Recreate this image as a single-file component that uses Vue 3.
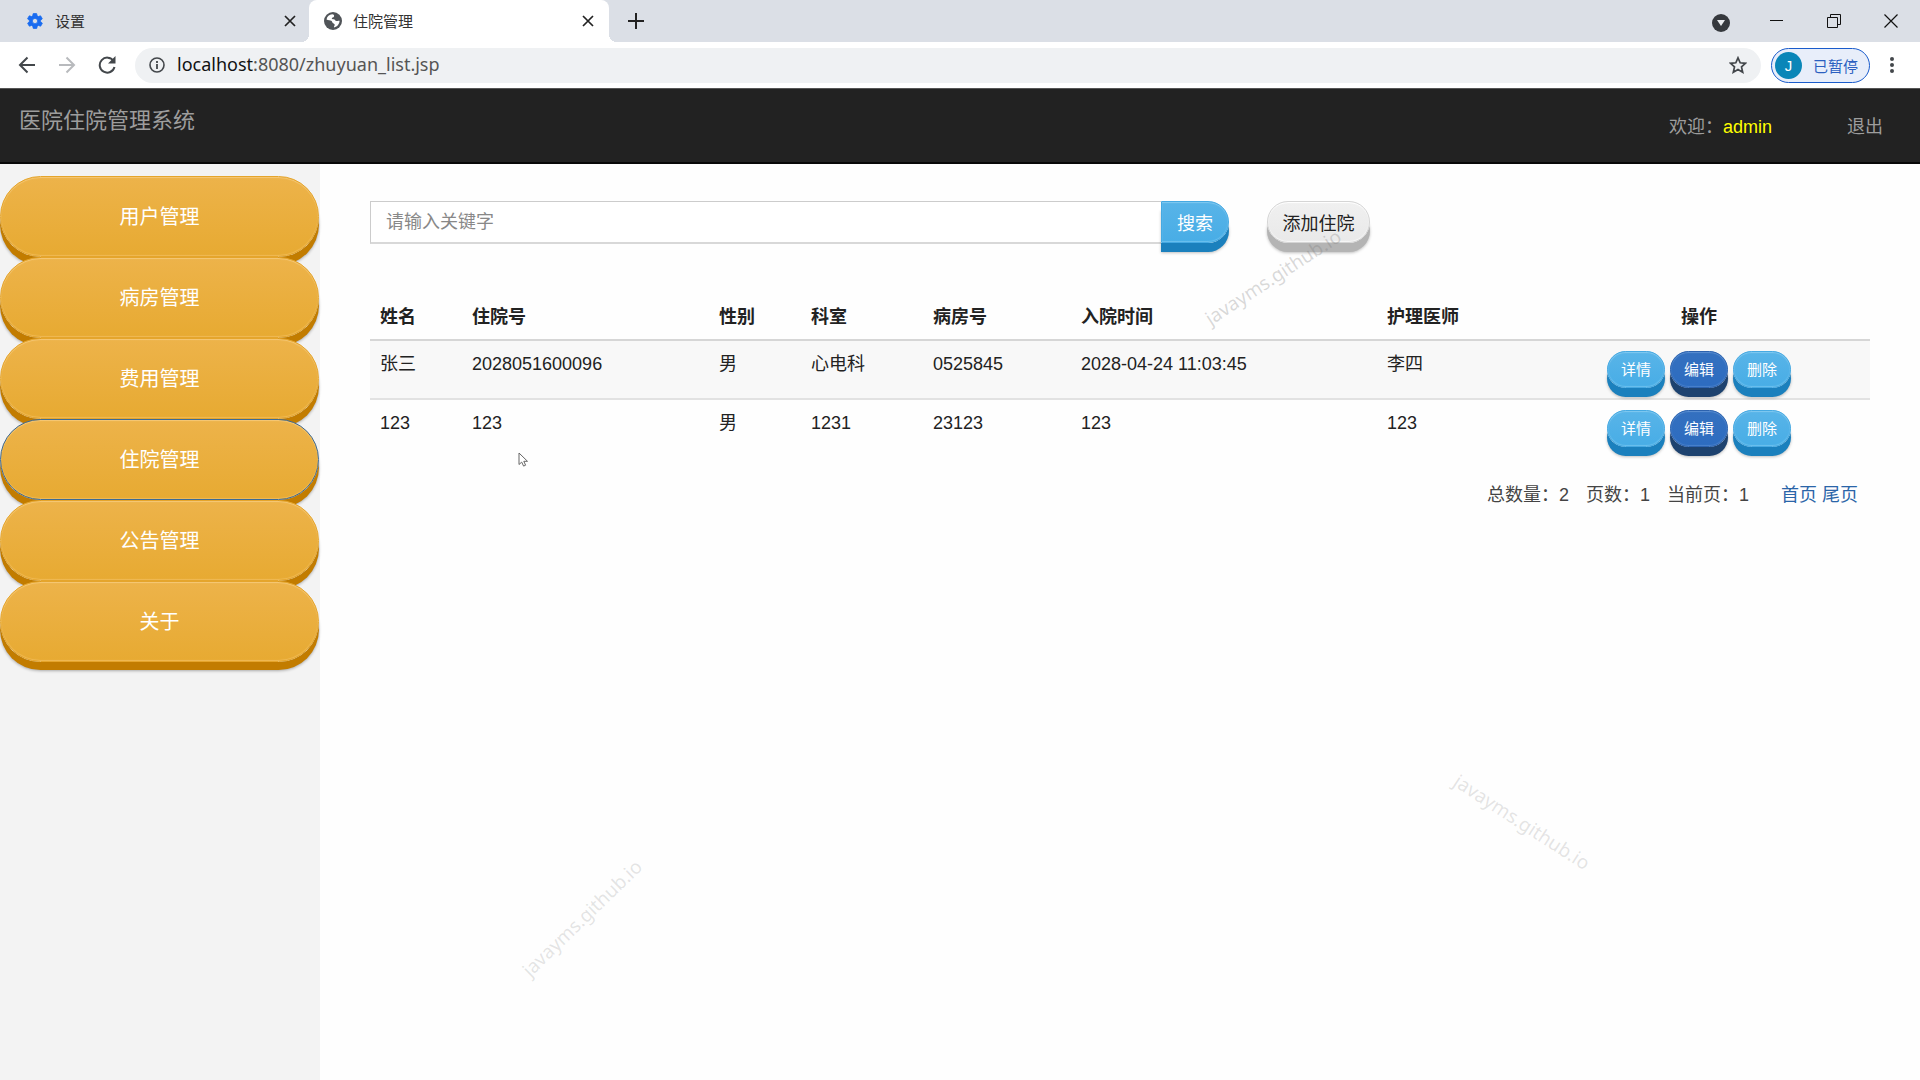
<script setup>
const navItems = ['用户管理', '病房管理', '费用管理', '住院管理', '公告管理', '关于']
const current = '住院管理'
const columns = [
  { title: '姓名', width: 92 },
  { title: '住院号', width: 247 },
  { title: '性别', width: 92 },
  { title: '科室', width: 122 },
  { title: '病房号', width: 148 },
  { title: '入院时间', width: 306 },
  { title: '护理医师', width: 151 },
  { title: '操作', width: 342 }
]
const rows = [
  ['张三', '2028051600096', '男', '心电科', '0525845', '2028-04-24 11:03:45', '李四'],
  ['123', '123', '男', '1231', '23123', '123', '123']
]
</script>

<template>
  <div class="window">
    <div class="tabs">
      <div class="tab">
        <svg class="fav" viewBox="0 0 24 24"><path fill="#1a6cf0" stroke="#1a6cf0" d="M19.4 13c0-.3.1-.6.1-1s0-.7-.1-1l2.1-1.600c.2-.2.3-.4.1-.7l-2-3.400c-.1-.2-.4-.3-.6-.2l-2.500 1c-.5-.4-1.100-.7-1.700-1l-.4-2.600c0-.3-.2-.5-.5-.5h-4c-.2 0-.5.2-.5.4l-.4 2.700c-.6.2-1.200.6-1.700 1l-2.500-1c-.2-.1-.5 0-.6.2l-2 3.400c-.1.3-.1.5.1.7L4.500 11c0 .3-.1.6-.1 1s0 .7.1 1l-2.100 1.600c-.2.2-.3.5-.1.7l2 3.400c.1.2.4.3.6.2l2.500-1c.5.4 1.100.7 1.700 1l.4 2.600c0 .3.200.5.500.5h4c.3 0 .5-.2.5-.5l.4-2.600c.6-.3 1.200-.6 1.700-1l2.500 1c.2.1.500 0 .6-.2l2-3.400c.1-.2.1-.5-.1-.7zM12 15.500a3.500 3.500 0 1 1 0-7 3.500 3.500 0 0 1 0 7z"/></svg>
        <span class="tab-title">设置</span>
        <button class="icon-btn" aria-label="关闭设置"><svg width="12" height="12" viewBox="0 0 12 12"><path d="M1 1l10 10M11 1L1 11" stroke="#222" stroke-width="1.700"/></svg></button>
      </div>
      <div class="tab active">
        <svg class="fav" viewBox="0 0 20 20"><circle cx="10" cy="10" r="10" fill="#505458"/><path fill="#fff" d="M9 2.600c2 .3 2.700 1.400 2 2.600-.6 1-2 .6-2.300 1.700-.2 1 .7 1 2.100 1.100 1.500.2 1.600 2 3 2.100 1.200.1 1.800-.6 3.500-.4-.1 3.600-2.500 6.700-6.200 7.400-.2-1.200.8-1.600.8-2.800 0-1.700-2.400-1.300-2.700-2.900-.3-1.400-1.700-1.800-3.300-2.100-1.300-.2-2.100-.6-3.100-1C3.400 5 6 2.800 9 2.600z"/></svg>
        <span class="tab-title">住院管理</span>
        <button class="icon-btn" aria-label="关闭住院管理"><svg width="12" height="12" viewBox="0 0 12 12"><path d="M1 1l10 10M11 1L1 11" stroke="#222" stroke-width="1.700"/></svg></button>
      </div>
      <button class="icon-btn plus" aria-label="新标签页"><svg width="16" height="16" viewBox="0 0 16 16"><path d="M8 0v16M0 8h16" stroke="#222" stroke-width="2"/></svg></button>
      <div class="win-controls">
        <button class="icon-btn low" aria-label="搜索标签页"><svg width="18" height="18" viewBox="0 0 18 18"><circle cx="9" cy="9" r="9" fill="#35383d"/><path d="M5 6h8l-4 6z" fill="#e8eaed"/></svg></button>
        <button class="icon-btn" aria-label="最小化"><svg width="14" height="14" viewBox="0 0 14 14"><path d="M0 6.500h13" stroke="#111"/></svg></button>
        <button class="icon-btn" aria-label="还原"><svg width="14" height="14" viewBox="0 0 14 14"><path d="M.5 3.500h10v10H.5zM3.500 3.500v-3h10v10h-3" fill="none" stroke="#111"/></svg></button>
        <button class="icon-btn" aria-label="关闭窗口"><svg width="14" height="14" viewBox="0 0 14 14"><path d="M.5.5l13 13M13.500.5l-13 13" stroke="#111" stroke-width="1.200"/></svg></button>
      </div>
    </div>

    <div class="toolbar">
      <button class="icon-btn" aria-label="后退"><svg width="18" height="18" viewBox="0 0 18 18" fill="none" stroke="#43474b" stroke-width="2"><path d="M17 9H2M9.500 1.500L2 9l7.500 7.500"/></svg></button>
      <button class="icon-btn" aria-label="前进"><svg width="18" height="18" viewBox="0 0 18 18" fill="none" stroke="#b8babd" stroke-width="2"><path d="M1 9h15M8.500 1.500L16 9l-7.500 7.500"/></svg></button>
      <button class="icon-btn" aria-label="刷新"><svg width="18" height="18" viewBox="0 0 18 18"><path d="M15.500 5A7.500 7.500 0 1 0 16.500 11" fill="none" stroke="#43474b" stroke-width="2"/><path d="M17.500 0v7.500H10z" fill="#43474b"/></svg></button>
      <label class="omnibox">
        <svg width="16" height="16" viewBox="0 0 16 16"><circle cx="8" cy="8" r="7" fill="none" stroke="#43474b" stroke-width="1.600"/><path d="M8 7v5M8 4v2" stroke="#43474b" stroke-width="1.800"/></svg>
        <span class="url"><b>localhost</b>:8080/zhuyuan_list.jsp</span>
        <svg width="18" height="18" viewBox="0 0 18 18"><path d="M9 1.800l2.200 5 5.300.5-4 3.600 1.200 5.300L9 13.400l-4.700 2.800 1.200-5.300-4-3.600 5.300-.5z" fill="none" stroke="#43474b" stroke-width="1.700"/></svg>
      </label>
      <button class="profile"><span class="avatar">J</span>已暂停</button>
      <button class="icon-btn" aria-label="菜单"><svg width="4" height="18" viewBox="0 0 4 18" fill="#43474b"><circle cx="2" cy="3" r="2"/><circle cx="2" cy="9" r="2"/><circle cx="2" cy="15" r="2"/></svg></button>
    </div>

    <header class="navbar">
      <a class="brand" href="#">医院住院管理系统</a>
      <p class="welcome">欢迎：<span>admin</span></p>
      <a class="logout" href="#">退出</a>
    </header>

    <div class="body">
      <nav class="sidebar">
        <button v-for="item in navItems" :key="item" class="nav-btn" :class="{ current: item === current }">{{ item }}</button>
      </nav>

      <main class="content">
        <form class="search" @submit.prevent>
          <input type="text" class="keyword" placeholder="请输入关键字" aria-label="请输入关键字" />
          <button class="btn blue search-btn">搜索</button>
          <button type="button" class="btn add-btn">添加住院</button>
        </form>

        <table>
          <colgroup><col v-for="c in columns" :key="c.title" :style="{ width: c.width + 'px' }" /></colgroup>
          <thead>
            <tr><th v-for="c in columns" :key="c.title">{{ c.title }}</th></tr>
          </thead>
          <tbody>
            <tr v-for="(row, i) in rows" :key="i">
              <td v-for="(cell, j) in row" :key="j">{{ cell }}</td>
              <td>
                <div class="actions">
                  <button class="btn small blue">详情</button>
                  <button class="btn small navy">编辑</button>
                  <button class="btn small blue">删除</button>
                </div>
              </td>
            </tr>
          </tbody>
        </table>

        <div class="pager">
          <span>总数量：2</span>
          <span>页数：1</span>
          <span>当前页：1</span>
          <span class="links"><a href="#">首页</a> <a href="#">尾页</a></span>
        </div>
      </main>
    </div>

    <span class="mark m1">javayms.github.io</span>
    <span class="mark m2">javayms.github.io</span>
    <span class="mark m3">javayms.github.io</span>
    <svg class="cursor" width="12" height="16" viewBox="0 0 12 16"><path d="M1 1v11.500l2.700-2.400 1.900 4 2-.9-1.800-3.900H9.500z" fill="#fff" stroke="#666"/></svg>
  </div>
</template>

<style>
body {
  margin: 0;
}
</style>

<style scoped>
* {
  box-sizing: border-box;
}
.window {
  position: relative;
  display: flex;
  flex-direction: column;
  min-height: 100vh;
  overflow: hidden;
  background: #fefefe;
  color: #222;
  font: 18px/26px "Liberation Sans", "Noto Sans CJK SC", sans-serif;
}
button {
  font-family: inherit;
  cursor: pointer;
}
a {
  text-decoration: none;
}
.icon-btn {
  display: flex;
  padding: 0;
  border: 0;
  background: none;
}
.tabs {
  display: flex;
  align-items: center;
  height: 42px;
  background: #dbdfe6;
}
.tab {
  display: flex;
  align-items: center;
  width: 300px;
  height: 42px;
  padding: 0 15px;
  color: #333;
  font-size: 15px;
}
.tab:first-child {
  width: 309px;
  padding: 0 13px 0 26px;
}
.active {
  position: relative;
  background: #fff;
  border-radius: 8px 8px 0 0;
}
.active::before,
.active::after {
  content: "";
  position: absolute;
  bottom: 0;
  width: 8px;
  height: 8px;
}
.active::before {
  right: 100%;
  background: radial-gradient(circle at 0 0, transparent 8px, #fff 8px);
}
.active::after {
  left: 100%;
  background: radial-gradient(circle at 100% 0, transparent 8px, #fff 8px);
}
.fav {
  width: 18px;
  height: 18px;
  margin-right: 11px;
}
.tab-title {
  flex: 1;
  padding-top: 2px;
}
.plus {
  margin-left: 19px;
}
.win-controls {
  display: flex;
  align-items: center;
  gap: 43px;
  height: 36px;
  margin-left: auto;
  padding-right: 22px;
}
.low {
  margin-right: -3px;
  padding-top: 3px;
}
.toolbar {
  display: flex;
  align-items: center;
  gap: 22px;
  height: 46px;
  padding: 0 26px 0 18px;
  background: #fff;
}
.omnibox {
  display: flex;
  flex: 1;
  align-items: center;
  height: 35px;
  margin: 0 -12px 0 -3px;
  padding: 0 14px;
  border-radius: 18px;
  background: #eff1f3;
}
.url {
  flex: 1;
  padding: 0 0 2px 12px;
  color: #555;
  font: 18px/24px "Noto Sans", sans-serif;
}
.url b {
  color: #111;
  font-weight: 400;
}
.profile {
  display: flex;
  align-items: center;
  gap: 11px;
  width: 99px;
  height: 35px;
  margin-right: -2px;
  padding: 0 0 0 3px;
  border: 1px solid #1a5ccc;
  border-radius: 18px;
  background: #e8eefa;
  color: #2b5fc0;
  font-size: 15px;
}
.avatar {
  width: 27px;
  height: 27px;
  border-radius: 50%;
  background: #0a86b8;
  color: #fff;
  line-height: 27px;
}
.navbar {
  display: flex;
  height: 76px;
  padding: 0 37px 0 19px;
  border-top: 1px solid #555;
  border-bottom: 2px solid #080808;
  background: #222;
  color: #9d9d9d;
}
.brand {
  margin-right: auto;
  padding-top: 19px;
  color: #9d9d9d;
  font-size: 22px;
}
.welcome {
  margin: 25px 75px 0 0;
}
.welcome span {
  color: #ffff00;
}
.logout {
  padding-top: 25px;
  color: #9d9d9d;
}
.body {
  display: flex;
  flex: 1;
}
.sidebar {
  width: 320px;
  padding: 12px 1px 0 0;
  background: #f3f3f3;
}
.nav-btn {
  display: block;
  width: 100%;
  height: 81px;
  padding: 0 0 2px;
  border: 1px solid #e5a52c;
  border-radius: 41px;
  background: linear-gradient(#edb34a, #e7aa32);
  box-shadow: inset 0 1px 1px #f5c877, inset 0 -1px 1px #f0ba55, 0 8px 0 #c27c00, 0 9px 3px rgba(0, 0, 0, 0.3);
  color: #fff;
  font-size: 20px;
}
.nav-btn.current {
  border-color: #3d6a94;
}
.content {
  flex: 1;
  padding: 37px 50px 0;
}
.search {
  display: flex;
  align-items: flex-start;
}
.keyword {
  width: 791px;
  height: 43px;
  padding: 1px 15px 0;
  border: 1px solid #ccc;
  border-right: 0;
  border-bottom: 2px solid #d8d8d8;
  background: #fff;
  font: inherit;
}
.keyword::placeholder {
  color: #888;
}
.btn {
  height: 42px;
  padding: 0 0 1px;
  border: 1px solid #d5d5d5;
  border-radius: 21px;
  background: linear-gradient(#f0f0f0, #e9e9e9);
  box-shadow: inset 0 1px 1px #fff, inset 0 -1px 1px #f8f8f8, 0 9px 0 #b4b4b4, 0 10px 3px rgba(0, 0, 0, 0.25);
  color: #222;
  font-size: 18px;
  white-space: nowrap;
}
.blue {
  border-color: #46a9e2;
  background: linear-gradient(#58b4e8, #48ade6);
  box-shadow: inset 0 1px 1px #82c9f0, inset 0 -1px 1px #6cc0ee, 0 9px 0 #1b80bd, 0 10px 3px rgba(0, 0, 0, 0.25);
  color: #fff;
}
.navy {
  border-color: #2c62ae;
  background: linear-gradient(#3470bf, #2d6cc0);
  box-shadow: inset 0 1px 1px #5c90d2, inset 0 -1px 1px #4a82cc, 0 9px 0 #1d426f, 0 10px 3px rgba(0, 0, 0, 0.25);
  color: #fff;
}
.search-btn {
  width: 68px;
  border-radius: 0 21px 21px 0;
}
.add-btn {
  width: 103px;
  margin-left: 38px;
}
table {
  width: 100%;
  margin-top: 50px;
  border-collapse: collapse;
  table-layout: fixed;
}
th {
  height: 46px;
  padding: 0 10px;
  border-bottom: 2px solid #d6d6d6;
  text-align: left;
  line-height: 26px;
}
th:last-child {
  text-align: center;
}
td {
  height: 58px;
  padding: 10px;
  border-bottom: 2px solid #e2e2e2;
  vertical-align: top;
}
tbody tr:first-child {
  background: #f8f8f8;
}
tbody tr:last-child td {
  border-bottom: 0;
}
.actions {
  display: flex;
  justify-content: center;
  gap: 5px;
  height: 37px;
}
.small {
  width: 58px;
  height: 37px;
  padding: 0 0 2px;
  border-radius: 19px;
  font-size: 15px;
}
.pager {
  display: flex;
  justify-content: flex-end;
  gap: 17px;
  margin-top: 25px;
  padding-right: 12px;
  color: #444;
}
.links {
  margin-left: 15px;
}
.links a {
  color: #2a65a8;
}
.mark {
  position: absolute;
  width: 180px;
  color: rgba(120, 120, 120, 0.2);
  font: 19px/28px "Noto Sans", sans-serif;
  text-align: center;
  pointer-events: none;
}
.m1 {
  left: 1183px;
  top: 263px;
  color: rgba(120, 120, 120, 0.28);
  transform: rotate(-33deg);
}
.m2 {
  left: 492px;
  top: 904px;
  transform: rotate(-44deg);
}
.m3 {
  left: 1432px;
  top: 808px;
  transform: rotate(33deg);
}
.cursor {
  position: absolute;
  left: 518px;
  top: 452px;
}
</style>
